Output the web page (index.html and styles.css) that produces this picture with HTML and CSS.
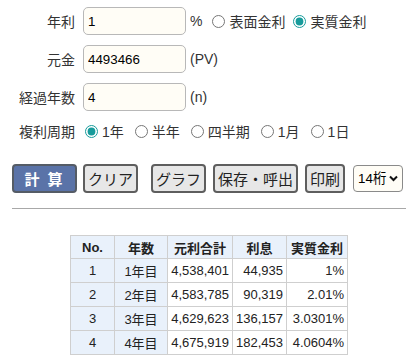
FILE: index.html
```html
<!DOCTYPE html>
<html lang="ja">

<head>
  <meta charset="UTF-8">
  <meta name="viewport" content="width=device-width, initial-scale=1.0">
  <title>複利計算</title>
  <link rel="stylesheet" href="styles.css">
</head>

<body>
  <div class="calc">
    <div class="row">
      <label class="lbl" for="rate">年利</label>
      <input class="field" id="rate" value="1">
      <span class="unit">%</span>
      <span class="opts first">
        <label><input type="radio" name="kind">表面金利</label>
        <label><input type="radio" name="kind" checked>実質金利</label>
      </span>
    </div>
    <div class="row">
      <label class="lbl" for="pv">元金</label>
      <input class="field" id="pv" value="4493466">
      <span class="unit">(PV)</span>
    </div>
    <div class="row">
      <label class="lbl" for="years">経過年数</label>
      <input class="field" id="years" value="4">
      <span class="unit">(n)</span>
    </div>
    <div class="row radios">
      <span class="lbl">複利周期</span>
      <span class="opts">
        <label><input type="radio" name="period" checked>1年</label>
        <label><input type="radio" name="period">半年</label>
        <label><input type="radio" name="period">四半期</label>
        <label><input type="radio" name="period">1月</label>
        <label><input type="radio" name="period">1日</label>
      </span>
    </div>

    <div class="buttons">
      <button class="btn calc-btn">計 算</button>
      <button class="btn">クリア</button>
      <button class="btn graph">グラフ</button>
      <button class="btn">保存・呼出</button>
      <button class="btn">印刷</button>
      <span class="digits">
        <select>
          <option>14桁</option>
        </select>
        <svg width="9" height="7" viewBox="0 0 9 7"><path d="M1 1.5 L4.5 5 L8 1.5" fill="none" stroke="#111" stroke-width="2"/></svg>
      </span>
    </div>

    <hr>

    <table class="result">
      <thead>
        <tr>
          <th class="c-no">No.</th>
          <th class="c-year">年数</th>
          <th class="c-total">元利合計</th>
          <th class="c-int">利息</th>
          <th class="c-rate">実質金利</th>
        </tr>
      </thead>
      <tbody>
        <tr>
          <td class="key">1</td>
          <td class="key">1年目</td>
          <td>4,538,401</td>
          <td>44,935</td>
          <td>1%</td>
        </tr>
        <tr>
          <td class="key">2</td>
          <td class="key">2年目</td>
          <td>4,583,785</td>
          <td>90,319</td>
          <td>2.01%</td>
        </tr>
        <tr>
          <td class="key">3</td>
          <td class="key">3年目</td>
          <td>4,629,623</td>
          <td>136,157</td>
          <td>3.0301%</td>
        </tr>
        <tr>
          <td class="key">4</td>
          <td class="key">4年目</td>
          <td>4,675,919</td>
          <td>182,453</td>
          <td>4.0604%</td>
        </tr>
      </tbody>
    </table>
  </div>
</body>

</html>
```

FILE: styles.css
```css
body {
  margin: 0;
  padding: 7px 11px 0 12px;
  font-family: "Liberation Sans", Arial, "Noto Sans CJK JP", sans-serif;
  font-size: 14px;
  color: #333;
  background: #fff;
}

.row {
  display: flex;
  align-items: center;
  height: 28px;
  margin-bottom: 10px;
}

.row.radios {
  height: 20px;
  margin-bottom: 0;
}

.lbl {
  width: 63px;
  margin-right: 8px;
  text-align: right;
  flex-shrink: 0;
}

.field {
  box-sizing: border-box;
  width: 103px;
  height: 28px;
  padding: 0 4px;
  border: 1px solid #b8b8b8;
  border-radius: 5px;
  background: #fffdf6;
  font-family: "Liberation Sans", Arial, sans-serif;
  font-size: 13.33px;
  color: #000;
}

.unit {
  margin-left: 4px;
}

.opts {
  display: flex;
  align-items: center;
  gap: 9px;
}

.opts.first {
  margin-left: 8px;
  gap: 6px;
}

.opts label {
  display: flex;
  align-items: center;
}

.opts input {
  width: 13px;
  height: 13px;
  margin: 0 4px 0 2px;
  accent-color: #179b9b;
}

.buttons {
  display: flex;
  align-items: center;
  gap: 7px;
  margin-top: 23px;
}

.btn {
  box-sizing: border-box;
  height: 29px;
  padding: 0 3px;
  border: 2px solid #5e5e5e;
  border-radius: 4px;
  background: #e7e7e7;
  font-family: "Liberation Sans", Arial, "Noto Sans CJK JP", sans-serif;
  font-size: 15px;
  color: #222;
}

.calc-btn {
  width: 65px;
  margin-right: -1px;
  background: #5a73a8;
  border-color: #555c66;
  color: #fff;
  font-weight: bold;
  letter-spacing: 2px;
}

.graph {
  margin-left: 6px;
}

.digits {
  position: relative;
  margin-left: 1px;
}

.digits select {
  box-sizing: border-box;
  width: 50px;
  height: 27px;
  padding: 0 0 0 4px;
  border: 1px solid #8a8a8a;
  border-radius: 4px;
  background: #fffdf6;
  font-family: "Liberation Sans", Arial, "Noto Sans CJK JP", sans-serif;
  font-size: 13.33px;
  color: #000;
  appearance: none;
}

.digits svg {
  position: absolute;
  right: 5px;
  top: 10px;
  pointer-events: none;
}

hr {
  margin: 15px 0 0 0;
  border: none;
  border-top: 1px solid #a8a8a8;
  height: 0;
}

.result {
  margin: 26px auto 0;
  border-collapse: collapse;
  font-size: 13px;
  color: #222;
}

.result th,
.result td {
  border: 1px solid #cfcfcf;
  padding: 0 3px;
}

.result th {
  height: 22px;
  background: #e9f1fb;
  font-weight: bold;
  text-align: center;
}

.result td {
  height: 23px;
  text-align: right;
}

.result td.key {
  background: #e9f1fb;
  text-align: center;
}

.c-no { width: 37px; }
.c-year { width: 46px; }
.c-total { width: 58px; }
.c-int { width: 45px; }
.c-rate { width: 54px; }
```
